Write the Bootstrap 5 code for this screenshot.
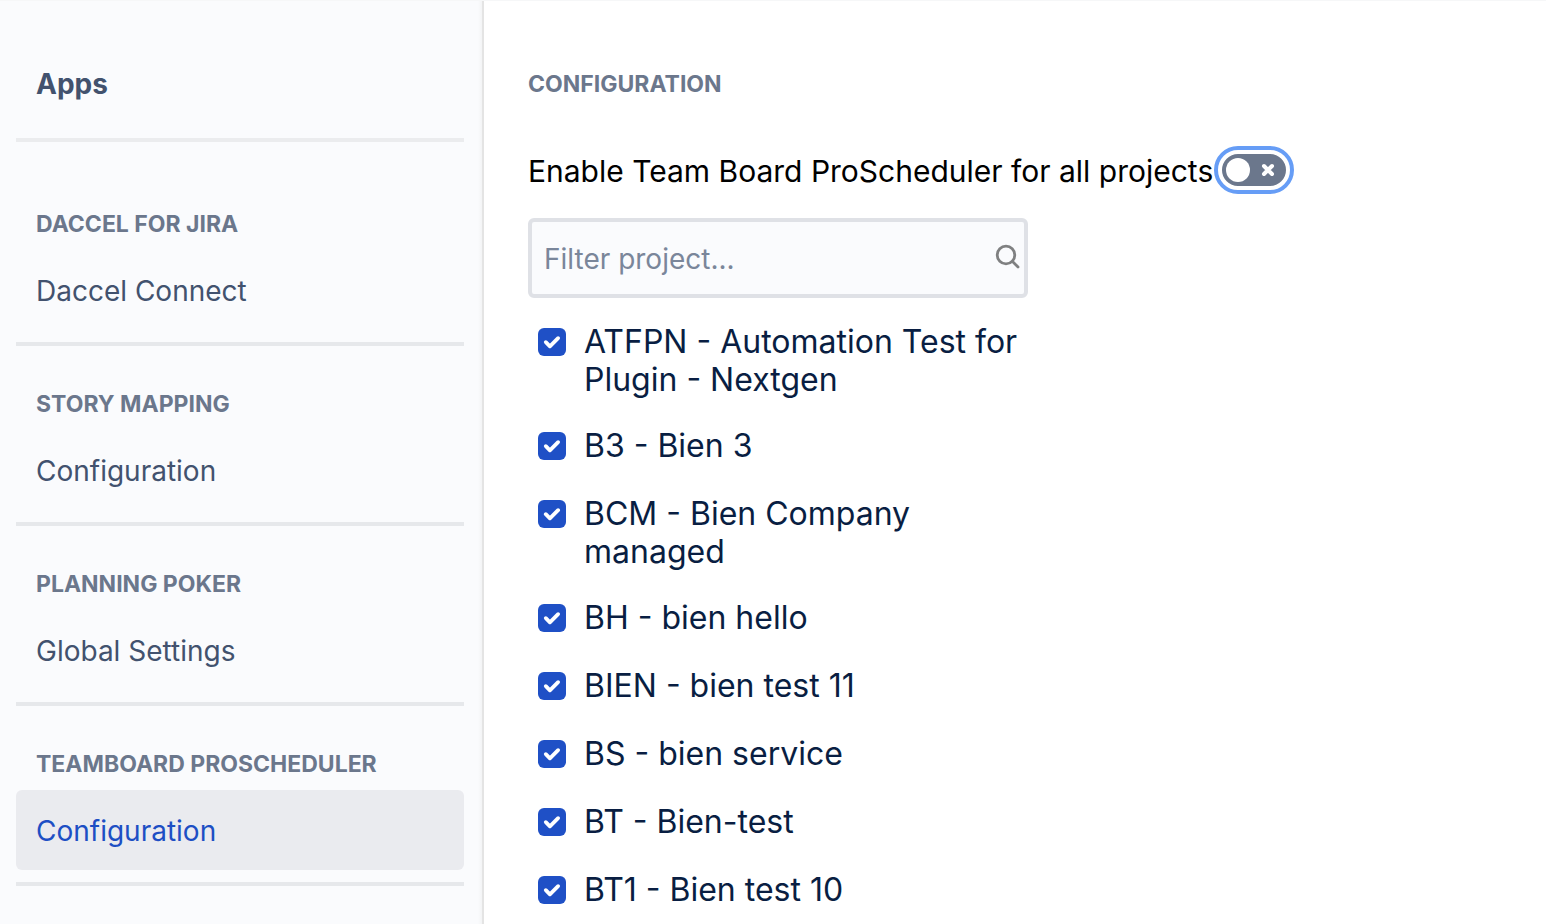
<!DOCTYPE html>
<html lang="en">
<head>
<meta charset="utf-8">
<meta name="viewport" content="width=device-width, initial-scale=1">
<title>Team Board ProScheduler configuration</title>
<link rel="stylesheet" href="https://cdn.jsdelivr.net/npm/bootstrap@5.3.0/dist/css/bootstrap.min.css">
<style>
  body { font-family: Inter, "Liberation Sans", sans-serif; color: #091e42; background: #fff; }
  .page { border-top: 1px solid #f6f7f8; }

  .sidebar { width: 484px; background: linear-gradient(to left, #f3f4f5, #fafbfd 4px); border-right: 2px solid #e4e4e4; padding: 0 18px 0 16px; }
  .sidebar-title { font-size: 28px; line-height: 40px; font-weight: 700; color: #42526e; padding: 63px 20px 34px; border-bottom: 4px solid #ebecee; }
  .app-group { border-bottom: 4px solid #e6e8eb; padding: 38px 0 12px; }
  .app-group:first-of-type { padding-top: 62px; }
  .section-label { font-size: 23px; line-height: 40px; font-weight: 700; color: #6b778c; }
  .app-group .section-label { padding: 0 20px; margin-bottom: 6px; }
  .app-link { font-size: 28px; line-height: 40px; padding: 21px 20px 19px; border-radius: 6px; color: #42526e; text-decoration: none; }
  .app-link.active { background: #eaebef; color: #1d4fc4; }

  .content { padding: 63px 44px 0; }
  .switch-row { font-size: 30px; line-height: 48px; color: #000; margin-top: 42px; gap: 5px; }
  .switch-row label { padding-top: 2px; line-height: 46px; }
  .toggle { width: 72px; height: 40px; flex: none; }
  .toggle input { appearance: none; width: 72px; height: 40px; margin: 0; border: 4px solid #fff; border-radius: 20px; background: #6b778c; outline: 4px solid #669df6; cursor: pointer; }
  .toggle svg { pointer-events: none; }

  .filter { max-width: 500px; margin-top: 24px; }
  .filter-input { height: 80px; font-size: 28px; border: 4px solid #dfe1e6; border-radius: 6px; background: #fafbfd; padding: 2px 48px 0 12px; }
  .filter-input::placeholder { color: #7a869a; opacity: 1; }
  .filter-icon { right: 6px; top: 25px; pointer-events: none; }

  .project-list { max-width: 500px; padding: 25px 0 0 10px; }
  .project { font-size: 32px; line-height: 38px; min-height: 40px; gap: 18px; margin-bottom: 28px; }
  .project input { appearance: none; flex: none; width: 28px; height: 28px; margin: 5px 0; border-radius: 6px; background: #1f50c6 url("data:image/svg+xml,%3Csvg xmlns='http://www.w3.org/2000/svg' viewBox='0 0 28 28'%3E%3Cpath d='M7.8 14.2l4.1 4.1 8.2-8.1' fill='none' stroke='white' stroke-width='3.8' stroke-linecap='round' stroke-linejoin='round'/%3E%3C/svg%3E"); }
  .project input:not(:checked) { background: #fafbfd; border: 4px solid #dfe1e6; }
</style>
</head>
<body>
<div class="page d-flex min-vh-100">
  <nav class="sidebar flex-shrink-0" aria-label="Apps">
    <h1 class="sidebar-title m-0">Apps</h1>
    <div class="app-group">
      <h2 class="section-label">DACCEL FOR JIRA</h2>
      <a class="app-link d-block" href="#">Daccel Connect</a>
    </div>
    <div class="app-group">
      <h2 class="section-label">STORY MAPPING</h2>
      <a class="app-link d-block" href="#">Configuration</a>
    </div>
    <div class="app-group">
      <h2 class="section-label">PLANNING POKER</h2>
      <a class="app-link d-block" href="#">Global Settings</a>
    </div>
    <div class="app-group">
      <h2 class="section-label">TEAMBOARD PROSCHEDULER</h2>
      <a class="app-link active d-block" href="#" aria-current="page">Configuration</a>
    </div>
  </nav>
  <main class="content flex-grow-1">
    <h2 class="section-label m-0">CONFIGURATION</h2>
    <div class="switch-row d-flex align-items-center">
      <label for="enable-all">Enable Team Board ProScheduler for all projects</label>
      <span class="toggle position-relative d-flex">
        <input id="enable-all" type="checkbox" role="switch">
        <svg class="position-absolute top-0 start-0" width="72" height="40" viewBox="0 0 72 40" aria-hidden="true">
          <circle cx="20" cy="20" r="12" fill="#fff"/>
          <path d="M46 16l8 8M54 16l-8 8" stroke="#fff" stroke-width="4" stroke-linecap="round"/>
        </svg>
      </span>
    </div>
    <div class="filter position-relative">
      <input class="filter-input form-control" type="text" placeholder="Filter project..." aria-label="Filter project">
      <svg class="filter-icon position-absolute" width="28" height="28" viewBox="0 0 28 28" fill="none" stroke="#7f8081" stroke-width="2.8" stroke-linecap="round" aria-hidden="true">
        <circle cx="12" cy="12" r="8.8"/>
        <path d="M18.5 18.5l5.5 5.5"/>
      </svg>
    </div>
    <div class="project-list">
      <div class="project d-flex"><input type="checkbox" id="p1" checked><label for="p1">ATFPN - Automation Test for Plugin - Nextgen</label></div>
      <div class="project d-flex"><input type="checkbox" id="p2" checked><label for="p2">B3 - Bien 3</label></div>
      <div class="project d-flex"><input type="checkbox" id="p3" checked><label for="p3">BCM - Bien Company managed</label></div>
      <div class="project d-flex"><input type="checkbox" id="p4" checked><label for="p4">BH - bien hello</label></div>
      <div class="project d-flex"><input type="checkbox" id="p5" checked><label for="p5">BIEN - bien test 11</label></div>
      <div class="project d-flex"><input type="checkbox" id="p6" checked><label for="p6">BS - bien service</label></div>
      <div class="project d-flex"><input type="checkbox" id="p7" checked><label for="p7">BT - Bien-test</label></div>
      <div class="project d-flex mb-0"><input type="checkbox" id="p8" checked><label for="p8">BT1 - Bien test 10</label></div>
    </div>
  </main>
</div>
<script src="https://cdn.jsdelivr.net/npm/bootstrap@5.3.0/dist/js/bootstrap.bundle.min.js"></script>
</body>
</html>
